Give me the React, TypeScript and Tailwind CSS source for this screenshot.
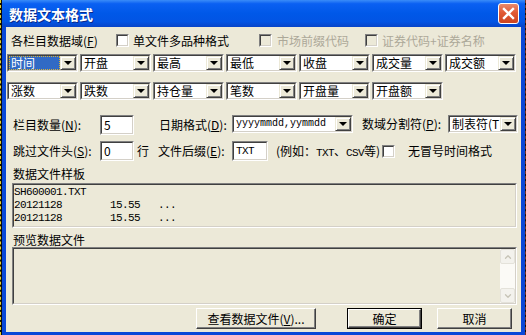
import React from "react"
import { ChevronUp, ChevronDown } from "lucide-react"

const sunkenOuter = "border border-t-[#808080] border-l-[#808080] border-r-white border-b-white"
const sunkenInner = "border border-t-[#404040] border-l-[#404040] border-r-[#d4d0c8] border-b-[#d4d0c8]"

function Combo({ value, className, selected, mono }: { value: string; className: string; selected?: boolean; mono?: boolean }) {
  return (
    <div className={`flex h-[18px] shrink-0 ${sunkenOuter} ${className}`}>
      <div className={`flex flex-1 min-w-0 bg-white ${sunkenInner}`}>
        <div
          className={`flex-1 min-w-0 whitespace-nowrap pl-[2px] ${
            mono ? "font-['Liberation_Mono',monospace] text-[10px] leading-[14px]" : "leading-[14px]"
          } ${selected ? "bg-[#316ac5] text-white outline-1 outline-dotted outline-[#d8b23a] -outline-offset-1" : ""}`}
        >
          {value}
        </div>
        <div className="flex w-[16px] shrink-0 items-center justify-center border border-t-[#ece9d8] border-l-[#ece9d8] border-r-[#404040] border-b-[#404040] bg-[#ece9d8] shadow-[inset_1px_1px_0_white,inset_-1px_-1px_0_#808080]">
          <div className="h-0 w-0 border-x-[4px] border-t-[4px] border-x-transparent border-t-black" />
        </div>
      </div>
    </div>
  )
}

function Check({ disabled }: { disabled?: boolean }) {
  return (
    <div className={`h-[13px] w-[13px] shrink-0 ${sunkenOuter}`}>
      <div className={`h-full w-full ${sunkenInner} ${disabled ? "bg-[#ece9d8]" : "bg-white"}`} />
    </div>
  )
}

function Input({ value, className }: { value: string; className: string }) {
  return (
    <div className={`h-[20px] shrink-0 ${sunkenOuter} ${className}`}>
      <div className={`h-full w-full bg-white pl-[2px] leading-[16px] ${sunkenInner}`}>{value}</div>
    </div>
  )
}

function Button({ children, className, isDefault }: { children: React.ReactNode; className: string; isDefault?: boolean }) {
  return (
    <div className={`h-[21px] shrink-0 ${isDefault ? "border border-black" : ""} ${className}`}>
      <div className="flex h-full w-full items-center justify-center border border-t-white border-l-white border-r-[#404040] border-b-[#404040] bg-[#ece9d8] shadow-[inset_-1px_-1px_0_#808080]">
        {children}
      </div>
    </div>
  )
}

export default function App() {
  const row1 = ["时间", "开盘", "最高", "最低", "收盘", "成交量", "成交额"]
  const row2 = ["涨数", "跌数", "持仓量", "笔数", "开盘量", "开盘额"]

  return (
    <div className="flex h-[335px] w-[526px] overflow-hidden bg-[#0c0c0c] font-['Noto_Sans_CJK_SC',sans-serif] text-[12px] text-black">
      {/* chart behind the dialog */}
      <div className="h-full w-[1px] shrink-0 border-l border-dashed border-[#e8d22a]" />
      <div className="h-full w-[1px] shrink-0" />

      <div className="flex h-[336px] w-[523px] shrink-0 flex-col">
        {/* title bar */}
        <div className="flex h-[27px] shrink-0 items-center justify-between bg-[linear-gradient(180deg,#3a8cf8_0%,#0a60f2_14%,#0058e8_50%,#0254e4_80%,#0744c8_100%)] pl-[7px] pr-[6px]">
          <span className="text-[14px] font-bold leading-none text-white [text-shadow:1px_1px_0_#0a2a8a]">数据文本格式</span>
          <div className="flex h-[21px] w-[21px] items-center justify-center rounded-[3px] border border-white bg-[linear-gradient(180deg,#e98a6c_0%,#e15a35_45%,#cc4420_100%)]">
            <svg width="13" height="13" viewBox="0 0 13 13">
              <path d="M2 2 L11 11 M11 2 L2 11" stroke="white" strokeWidth="2.4" strokeLinecap="square" />
            </svg>
          </div>
        </div>

        {/* client */}
        <div className="flex flex-1 border-x-4 border-b-4 border-[#0a48d8]">
          <div className="flex h-[305px] w-[515px] flex-col bg-[#ece9d8]">
            {/* options */}
            <div className="mt-[7px] flex h-[13px] items-center leading-[13px]">
              <span className="ml-[5px] w-[105px] shrink-0">各栏目数据域(<u>F</u>)</span>
              <Check />
              <span className="ml-[4px] w-[126px] shrink-0">单文件多品种格式</span>
              <Check disabled />
              <span className="ml-[5px] w-[88px] shrink-0 text-[#aca899]">市场前缀代码</span>
              <Check disabled />
              <span className="ml-[4px] shrink-0 text-[#aca899]">证券代码+证券名称</span>
            </div>

            <div className="ml-[1px] mt-[7px] flex gap-[2px]">
              {row1.map((v, i) => (
                <Combo key={i} value={v} className="w-[71px]" selected={i === 0} />
              ))}
            </div>
            <div className="ml-[1px] mt-[10px] flex gap-[2px]">
              {row2.map((v, i) => (
                <Combo key={i} value={v} className="w-[71px]" />
              ))}
            </div>

            {/* counts & formats */}
            <div className="mt-[15px] flex h-[20px] items-start">
              <span className="ml-[7px] w-[87px] shrink-0 leading-[20px]">栏目数量(<u>N</u>):</span>
              <Input value="5" className="w-[34px]" />
              <span className="ml-[25px] w-[73px] shrink-0 leading-[20px]">日期格式(<u>D</u>):</span>
              <Combo value="yyyymmdd,yymmdd" className="w-[121px]" mono />
              <span className="ml-[9px] w-[86px] shrink-0 leading-[18px]">数域分割符(<u>P</u>):</span>
              <Combo value="制表符(T" className="w-[70px]" />
            </div>

            <div className="mt-[6px] flex h-[20px] items-start leading-[20px]">
              <span className="ml-[7px] w-[87px] shrink-0">跳过文件头(<u>S</u>):</span>
              <Input value="0" className="w-[34px]" />
              <span className="ml-[3px] w-[21px] shrink-0">行</span>
              <span className="w-[74px] shrink-0">文件后缀(<u>E</u>):</span>
              <div className={`h-[20px] w-[36px] shrink-0 ${sunkenOuter}`}>
                <div className={`h-full w-full bg-white pl-[2px] font-['Liberation_Mono',monospace] text-[11px] leading-[16px] tracking-[-0.6px] ${sunkenInner}`}>
                  TXT
                </div>
              </div>
              <span className="ml-[8px] w-[106px] shrink-0 whitespace-nowrap">
                (例如：<span className="font-['Liberation_Mono',monospace] text-[11px] tracking-[-0.6px]">TXT</span>、<span className="font-['Liberation_Mono',monospace] text-[11px] tracking-[-0.6px]">CSV</span>等)
              </span>
              <div className="mt-[4px]">
                <Check />
              </div>
              <span className="ml-[13px] shrink-0">无冒号时间格式</span>
            </div>

            {/* sample */}
            <div className="ml-[7px] mt-[6px] h-[13px] leading-[13px]">数据文件样板</div>
            <div className={`ml-[6px] mt-[3px] h-[45px] w-[505px] ${sunkenOuter}`}>
              <div className={`h-full w-full whitespace-pre pt-[1px] font-['Liberation_Mono',monospace] text-[11px] leading-[13px] tracking-[-0.6px] ${sunkenInner}`}>
                <div>SH600001.TXT</div>
                <div>20121128        15.55   ...</div>
                <div>20121128        15.55   ...</div>
              </div>
            </div>

            {/* preview */}
            <div className="ml-[7px] mt-[5px] h-[14px] leading-[14px]">预览数据文件</div>
            <div className={`ml-[6px] h-[58px] w-[505px] ${sunkenOuter}`}>
              <div className={`flex h-full w-full justify-end ${sunkenInner}`}>
                <div className="flex w-[15px] flex-col justify-between bg-[#fbfaf6]">
                  <div className="flex h-[15px] items-center justify-center rounded-[2px] border border-[#e4e2da] bg-[#f3f2ed]">
                    <ChevronUp size={10} strokeWidth={3} color="#c6c3b6" />
                  </div>
                  <div className="flex h-[15px] items-center justify-center rounded-[2px] border border-[#e4e2da] bg-[#f3f2ed]">
                    <ChevronDown size={10} strokeWidth={3} color="#c6c3b6" />
                  </div>
                </div>
              </div>
            </div>

            {/* buttons */}
            <div className="mt-[3px] flex">
              <Button className="ml-[190px] w-[120px]">
                查看数据文件(<u>V</u>)...
              </Button>
              <Button className="ml-[31px] w-[75px]" isDefault>
                确定
              </Button>
              <Button className="ml-[15px] w-[75px]">取消</Button>
            </div>
          </div>
        </div>
      </div>

      <div className="h-full w-[1px] shrink-0 border-l border-dashed border-[#7a3020]" />
    </div>
  )
}
